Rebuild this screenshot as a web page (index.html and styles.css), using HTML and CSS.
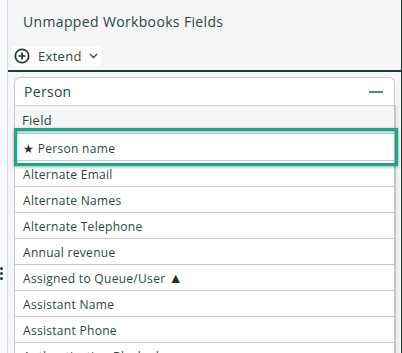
FILE: index.html
```html
<!DOCTYPE html>
<html lang="en">
<head>
    <meta charset="UTF-8">
    <meta name="viewport" content="width=device-width, initial-scale=1.0">
    <title>Unmapped Workbooks Fields</title>
    <link rel="stylesheet" href="styles.css">
</head>
<body>
    <div class="layout">
        <div class="gutter">
            <div class="handle">
                <span></span><span></span><span></span>
            </div>
        </div>

        <div class="panel">
            <div class="panel-head">
                <h2 class="panel-title">Unmapped Workbooks Fields</h2>
                <button class="extend-btn">
                    <svg width="16" height="16" viewBox="0 0 16 16">
                        <circle cx="8" cy="8" r="6.7" fill="none" stroke="#1e3a33" stroke-width="1.7"/>
                        <path d="M8 4.5v7M4.5 8h7" stroke="#1e3a33" stroke-width="1.7"/>
                    </svg>
                    <span>Extend</span>
                    <svg class="caret" width="9" height="6" viewBox="0 0 9 6">
                        <path d="M1 1l3.5 3.5L8 1" fill="none" stroke="#2f4a41" stroke-width="1.3"/>
                    </svg>
                </button>
            </div>

            <div class="panel-body">
                <div class="card">
                    <div class="card-head">
                        <span>Person</span>
                        <span class="collapse"></span>
                    </div>
                    <div class="col-head">Field</div>
                    <div class="rows" id="rows">
                        <!-- rows are filled by script -->
                    </div>
                </div>
                <div class="scrollbar"></div>
            </div>
        </div>
    </div>

    <script>
        // field list
        const fields = [
            { name: 'Person name', required: true, selected: true },
            { name: 'Alternate Email' },
            { name: 'Alternate Names' },
            { name: 'Alternate Telephone' },
            { name: 'Annual revenue' },
            { name: 'Assigned to Queue/User', warn: true },
            { name: 'Assistant Name' },
            { name: 'Assistant Phone' },
            { name: 'Authentication Blocked' }
        ];

        const rows = document.getElementById('rows');
        fields.forEach(field => {
            let text = field.name;
            if (field.required) text = '<span class="star">★</span> ' + text;
            if (field.warn) text = text + ' <span class="warn">▲</span>';
            rows.innerHTML += `<div class="row${field.selected ? ' selected' : ''}">${text}</div>`;
        });
    </script>
</body>
</html>
```

FILE: styles.css
```css
* {
    margin: 0;
    padding: 0;
    box-sizing: border-box;
}

body {
    width: 402px;
    height: 353px;
    overflow: hidden;
    background-color: #f5f6f8;
    font-family: 'Open Sans', 'Liberation Sans', sans-serif;
    color: #2c473e;
}

.layout {
    display: flex;
    height: 353px;
}

.gutter {
    width: 8px;
    border-right: 1px solid #dcdde0;
    background-color: #f8f9fa;
    padding-top: 267px;
}

.handle {
    display: flex;
    flex-direction: column;
    gap: 2px;
    width: 3px;
}

.handle span {
    width: 3px;
    height: 3px;
    border-radius: 50%;
    background-color: #1d3557;
}

.panel {
    flex: 1;
    border-right: 1px solid #1f3d36;
    display: flex;
    flex-direction: column;
}

.panel-head {
    padding: 12px 0 4px 4px;
    border-bottom: 2px solid #1f3d36;
}

.panel-title {
    font-size: 14px;
    font-weight: 400;
    letter-spacing: 0.35px;
    margin-left: 11px;
    line-height: 20px;
    margin-bottom: 14px;
}

.extend-btn {
    display: flex;
    align-items: center;
    gap: 8px;
    width: 89px;
    height: 20px;
    padding-left: 2px;
    border: none;
    border-radius: 3px;
    background-color: white;
    font-family: inherit;
    font-size: 13px;
    letter-spacing: 0.3px;
    color: #2c473e;
}

.extend-btn .caret {
    margin-left: -1px;
}

.panel-body {
    flex: 1;
    display: flex;
    padding: 5px 0 0 6px;
    overflow: hidden;
}

.card {
    width: 381px;
    background-color: white;
    border: 1px solid #cacbcd;
    border-bottom: none;
    border-radius: 6px 6px 0 0;
}

.scrollbar {
    width: 5px;
    border-left: 2px solid #c6c6c6;
    margin-left: -1px;
    margin-top: 28px;
    background-color: #eceded;
}

.card-head {
    display: flex;
    justify-content: space-between;
    align-items: center;
    height: 28px;
    padding: 0 11px 0 9px;
    font-size: 14px;
    letter-spacing: 0.3px;
    border-bottom: 1px solid #cacbcd;
}

.collapse {
    width: 14px;
    height: 2px;
    background-color: #3a9a78;
}

.col-head {
    height: 27px;
    padding: 5px 7px 0;
    font-size: 13px;
    letter-spacing: 0.3px;
    background-color: #f5f6f8;
}

.row {
    height: 26px;
    padding: 5px 8px 0;
    font-size: 12px;
    letter-spacing: 0.3px;
    border-bottom: 1px solid #c8c8c8;
}

.row .star {
    color: #1f2f2a;
}

.row .warn {
    font-size: 14px;
    line-height: 12px;
    color: #1f2f2a;
}

.row.selected {
    position: relative;
    height: 28px;
    padding-top: 6px;
    border-top: 1px solid #c8c8c8;
}

.row.selected::after {
    content: '';
    position: absolute;
    top: -6px;
    bottom: -6px;
    left: -1px;
    right: -4px;
    border: 3px solid #17a886;
    box-shadow: 0 1px 3px rgba(0, 0, 0, 0.35), inset 0 1px 3px rgba(0, 0, 0, 0.3);
}
```
